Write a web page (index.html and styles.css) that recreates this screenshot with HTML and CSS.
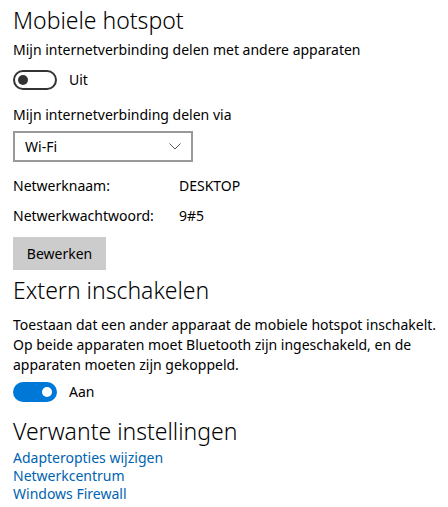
FILE: index.html
```html
<!DOCTYPE html>
<html lang="nl">
<head>
<meta charset="utf-8">
<title>Mobiele hotspot</title>
<link rel="stylesheet" href="styles.css">
</head>
<body>
<main class="page">
  <section class="section">
    <h2 class="title">Mobiele hotspot</h2>
    <p class="label">Mijn internetverbinding delen met andere apparaten</p>
    <div class="toggle-row">
      <span class="toggle off"><span class="knob"></span></span>
      <span class="toggle-text">Uit</span>
    </div>
    <p class="label label-via">Mijn internetverbinding delen via</p>
    <div class="select">
      <span class="select-text">Wi-Fi</span>
      <svg class="chevron" width="12" height="7" viewBox="0 0 12 7"><path d="M0.5 0.5 L6 6 L11.5 0.5" fill="none" stroke="#555" stroke-width="1"/></svg>
    </div>
    <dl class="props">
      <dt>Netwerknaam:</dt><dd>DESKTOP</dd>
      <dt>Netwerkwachtwoord:</dt><dd>9#5</dd>
    </dl>
    <button class="btn">Bewerken</button>
  </section>
  <section class="section">
    <h2 class="title title-2">Extern inschakelen</h2>
    <p class="para">Toestaan dat een ander apparaat de mobiele hotspot inschakelt. Op beide apparaten moet Bluetooth zijn ingeschakeld, en de apparaten moeten zijn gekoppeld.</p>
    <div class="toggle-row toggle-row-2">
      <span class="toggle on"><span class="knob"></span></span>
      <span class="toggle-text">Aan</span>
    </div>
  </section>
  <section class="section">
    <h2 class="title title-3">Verwante instellingen</h2>
    <nav class="links">
      <a href="#">Adapteropties wijzigen</a>
      <a href="#">Netwerkcentrum</a>
      <a href="#">Windows Firewall</a>
    </nav>
  </section>
</main>
</body>
</html>
```
FILE: styles.css
```css
html, body {
  margin: 0;
  padding: 0;
  background: #fff;
}
body {
  font-family: "Noto Sans", "Open Sans", sans-serif;
  color: #000;
  font-size: 14px;
}
.page {
  padding: 5px 0 0 13px;
}
.title {
  margin: 0;
  font-size: 23px;
  font-weight: 300;
  line-height: 30px;
}
.label {
  margin: 5px 0 0;
  line-height: 20px;
}
.toggle-row {
  display: flex;
  align-items: center;
  gap: 12px;
  margin-top: 10px;
  height: 20px;
}
.toggle {
  box-sizing: border-box;
  width: 44px;
  height: 20px;
  border-radius: 10px;
  display: flex;
  align-items: center;
  padding: 0 3px;
}
.toggle .knob {
  width: 10px;
  height: 10px;
  border-radius: 50%;
}
.toggle.off {
  border: 2px solid #333;
  background: #fff;
  justify-content: flex-start;
}
.toggle.off .knob {
  background: #333;
}
.toggle.on {
  background: #0078d7;
  justify-content: flex-end;
  padding: 0 5px;
}
.toggle.on .knob {
  background: #fff;
}
.toggle-text {
  line-height: 20px;
}
.label-via {
  margin-top: 15px;
}
.select {
  box-sizing: border-box;
  width: 180px;
  height: 31px;
  border: 2px solid #999;
  margin-top: 6px;
  display: flex;
  align-items: center;
  justify-content: space-between;
  padding: 0 10px 0 10px;
}
.props {
  display: grid;
  grid-template-columns: 166px auto;
  row-gap: 10px;
  margin: 14px 0 0;
  line-height: 20px;
}
.props dt, .props dd {
  margin: 0;
}
.btn {
  display: block;
  margin-top: 11px;
  width: 93px;
  height: 33px;
  border: 0;
  background: #ccc;
  font: inherit;
  color: #000;
  padding: 0;
}
.title-2 {
  margin-top: 5px;
}
.para {
  margin: 10px 0 0;
  line-height: 20px;
  width: 430px;
}
.toggle-row-2 {
  margin-top: 7px;
}
.title-3 {
  margin-top: 14px;
}
.links {
  display: flex;
  flex-direction: column;
  align-items: flex-start;
  line-height: 18px;
  margin-top: 3px;
}
.links a {
  color: #0063b1;
  text-decoration: none;
}
```
